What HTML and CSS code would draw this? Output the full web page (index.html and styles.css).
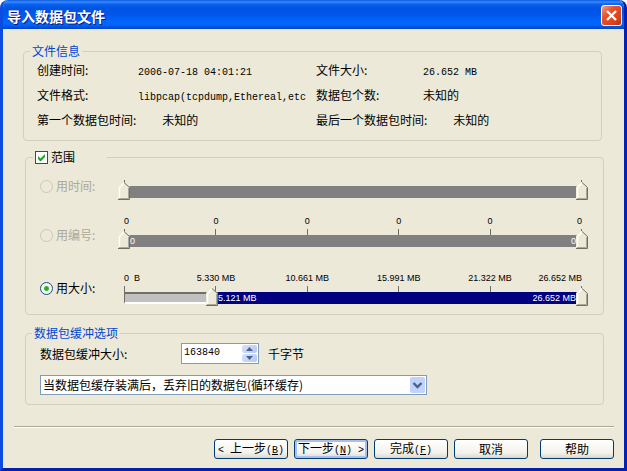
FILE: index.html
```html
<!DOCTYPE html>
<html lang="zh-CN">
<head>
<meta charset="utf-8">
<title>导入数据包文件</title>
<link rel="stylesheet" href="styles.css">
</head>
<body>
<form class="window">
  <header class="titlebar">
    <h1>导入数据包文件</h1>
    <button class="close" type="button" aria-label="关闭">
      <svg viewBox="0 0 19 19" width="19" height="19"><path d="M5 5l9 9M14 5l-9 9" stroke="#fff" stroke-width="2.4" fill="none"/></svg>
    </button>
  </header>

  <main class="content">
    <fieldset class="group group-info">
      <legend>文件信息</legend>
      <dl class="info">
        <div><dt>创建时间:</dt><dd class="mono">2006-07-18 04:01:21</dd></div>
        <div><dt>文件大小:</dt><dd class="mono">26.652 MB</dd></div>
        <div><dt>文件格式:</dt><dd class="mono">libpcap(tcpdump,Ethereal,etc</dd></div>
        <div><dt>数据包个数:</dt><dd>未知的</dd></div>
        <div class="long"><dt>第一个数据包时间:</dt><dd>未知的</dd></div>
        <div class="long"><dt>最后一个数据包时间:</dt><dd>未知的</dd></div>
      </dl>
    </fieldset>

    <fieldset class="group group-range">
      <legend class="toggle">
        <input class="check" type="checkbox" id="range-on" checked><label for="range-on">范围</label>
      </legend>

      <div class="row">
        <div class="choice">
          <input class="radio" type="radio" name="by" id="by-time" disabled><label for="by-time">用时间:</label>
        </div>
        <div class="slider">
          <ul class="scale"><li></li><li></li></ul>
          <div class="track">
            <div class="span"></div>
            <input type="range" min="0" max="1000" value="0" disabled aria-label="开始时间">
            <input type="range" min="0" max="1000" value="1000" disabled aria-label="结束时间">
          </div>
        </div>
      </div>

      <div class="row">
        <div class="choice">
          <input class="radio" type="radio" name="by" id="by-number" disabled><label for="by-number">用编号:</label>
        </div>
        <div class="slider">
          <ul class="scale"><li>0</li><li>0</li><li>0</li><li>0</li><li>0</li><li>0</li></ul>
          <div class="track">
            <div class="span"><span>0</span><span>0</span></div>
            <input type="range" min="0" max="1000" value="0" disabled aria-label="开始编号">
            <input type="range" min="0" max="1000" value="1000" disabled aria-label="结束编号">
          </div>
        </div>
      </div>

      <div class="row row-active">
        <div class="choice">
          <input class="radio" type="radio" name="by" id="by-size" checked><label for="by-size">用大小:</label>
        </div>
        <div class="slider">
          <ul class="scale"><li>0 &nbsp;B</li><li>5.330 MB</li><li>10.661 MB</li><li>15.991 MB</li><li>21.322 MB</li><li>26.652 MB</li></ul>
          <div class="track">
            <div class="rest" style="width: 19.2%"></div>
            <div class="span"><span>5.121 MB</span><span>26.652 MB</span></div>
            <input type="range" min="0" max="1000" value="192" aria-label="开始大小">
            <input type="range" min="0" max="1000" value="1000" aria-label="结束大小">
          </div>
        </div>
      </div>
    </fieldset>

    <fieldset class="group group-buffer">
      <legend>数据包缓冲选项</legend>
      <div class="buffer">
        <label class="buffer-label" for="size">数据包缓冲大小:</label>
        <div class="spinner">
          <input class="mono" id="size" type="text" value="163840">
          <div class="steps">
            <button type="button" aria-label="增加"><svg viewBox="0 0 15 8" width="15" height="8"><path d="M4 6l3.500-4 3.500 4z" fill="#4d6185"/></svg></button>
            <button type="button" aria-label="减少"><svg viewBox="0 0 15 8" width="15" height="8"><path d="M4 2l3.500 4 3.500-4z" fill="#4d6185"/></svg></button>
          </div>
        </div>
        <span>千字节</span>
      </div>
      <select class="mode" aria-label="缓冲方式">
        <option>当数据包缓存装满后，丢弃旧的数据包(循环缓存)</option>
      </select>
    </fieldset>
  </main>

  <footer class="actions">
    <button type="button"><span class="mono">&lt; </span>上一步<span class="mono">(<u>B</u>)</span></button>
    <button type="button" class="default">下一步<span class="mono">(<u>N</u>) &gt;</span></button>
    <button type="button">完成<span class="mono">(<u>F</u>)</span></button>
    <button type="button">取消</button>
    <button type="button" class="help">帮助</button>
  </footer>
</form>
</body>
</html>
```

FILE: styles.css
```css
* {
  box-sizing: border-box;
}

body {
  margin: 0;
  background: #fff;
  color: #000;
  font: 12px/16px "Noto Sans CJK SC", sans-serif;
}

button,
input,
select {
  margin: 0;
  font: inherit;
  color: inherit;
}

.mono {
  font-family: "Liberation Mono", "Noto Sans CJK SC", monospace;
  font-size: 10px;
  white-space: pre;
}

.window {
  display: flex;
  flex-direction: column;
  min-height: 100vh;
  border: 3px solid #0831d9;
  border-top: 0;
  border-left-color: #0a4be0;
  border-right-color: #0423b4;
  border-bottom-color: #0420b0;
  border-radius: 8px 8px 0 0;
  background: #ece9d8;
  overflow: hidden;
}

/* Title bar */

.titlebar {
  display: flex;
  align-items: center;
  justify-content: space-between;
  height: 29px;
  margin: 0 -3px;
  padding: 2px 5px 0 7px;
  background: linear-gradient(#0a58dc 0, #3a8cff 2px, #0a62ee 4px, #0054e3 8px, #0056e8 14px, #0066ff 22px, #0064f8 25px, #0042c4 29px);
}

.titlebar h1 {
  margin: 0;
  color: #fff;
  font-size: 14px;
  font-weight: bold;
  line-height: 18px;
  text-shadow: 1px 1px #0a1883;
}

.close {
  display: flex;
  width: 21px;
  height: 21px;
  padding: 0;
  border: 1px solid #fff;
  border-radius: 3px;
  background: linear-gradient(135deg, #f0a088, #e4532c 35%, #d8421c 75%, #b8300c);
}

/* Groups */

.content {
  flex: 1;
  padding: 14px 20px 0;
}

.group {
  min-width: 0;
  margin: 0;
  padding: 0;
  border: 1px solid #d0d0bf;
  border-radius: 4px;
}

.group legend {
  margin-left: 6px;
  padding: 0 2px;
  color: #0046d5;
}

.group-info {
  margin-right: 2px;
  padding: 0 13px 9px;
}

.group-info legend {
  margin-left: -7px;
}

.group-range {
  margin: 8px 0 10px 2px;
  padding: 15px 15px 10px 14px;
}

.group-buffer {
  margin-left: 2px;
  padding: 2px 14px 9px;
}

.group-buffer legend {
  margin-left: -8px;
}

.info {
  display: grid;
  grid-template-columns: 279px 1fr;
  row-gap: 3px;
  margin: 0;
  line-height: 22px;
  white-space: nowrap;
}

.info div {
  display: flex;
  align-items: baseline;
  height: 22px;
}

.info dt {
  width: 101px;
}

.info div:nth-child(even) dt {
  width: 107px;
}

.info .long dt,
.info .long:nth-child(even) dt {
  width: auto;
  margin-right: 26px;
}

.info dd {
  margin: 0;
}

/* Range sliders */

.group .toggle {
  display: flex;
  align-items: center;
  gap: 3px;
  min-width: 74px;
  margin-left: -7px;
  color: #000;
}

.check {
  appearance: none;
  width: 13px;
  height: 13px;
  border: 1px solid #1c5180;
  background: #fff url("data:image/svg+xml,%3Csvg xmlns='http://www.w3.org/2000/svg' viewBox='0 0 11 11'%3E%3Cpath d='M2 4v3l2.500 2.500L9 5V2L4.500 6.500z' fill='%2321a121'/%3E%3C/svg%3E");
}

.row {
  display: grid;
  grid-template-columns: 78px 1fr;
  align-items: end;
}

.row + .row {
  margin-top: 17px;
}

.row + .row-active {
  margin-top: 25px;
}

.choice {
  display: flex;
  align-items: center;
  gap: 3px;
  height: 24px;
  margin-top: -6px;
}

.row-active .choice {
  align-self: center;
  margin-top: 0;
}

.radio {
  appearance: none;
  width: 13px;
  height: 13px;
  border: 1px solid #1c5180;
  border-radius: 50%;
  background: #fff;
}

.radio:checked {
  background: radial-gradient(circle, #21a121 0, #35b935 2px, #f4f4ee 3px);
}

.radio:disabled {
  border-color: #cac8bb;
  background: #ece9d8;
}

.radio:disabled + label {
  color: #aca899;
}

.scale {
  display: flex;
  justify-content: space-between;
  margin: 0 6px;
  padding: 0;
  list-style: none;
  font: 9px/12px "Liberation Sans", sans-serif;
  white-space: nowrap;
}

.scale li {
  display: flex;
  flex-direction: column;
  align-items: center;
  width: 1px;
}

.scale li:first-child {
  align-items: flex-start;
}

.scale li:last-child {
  align-items: flex-end;
}

.scale li::after {
  content: "";
  width: 1px;
  height: 6px;
  background: #716f64;
}

.scale li:not(:empty)::after {
  margin-top: 2px;
}

.track {
  position: relative;
  display: flex;
  height: 12px;
  padding: 0 6px;
}

.rest {
  border: solid #716f64;
  border-width: 2px 0 2px 1px;
  border-bottom-color: #fff;
  background: #c0c0c0;
}

.span {
  display: flex;
  flex: 1;
  justify-content: space-between;
  padding: 0 6px;
  background: #808080;
  color: #fff;
  font: 9px/12px "Liberation Sans", sans-serif;
}

.row-active .span {
  background: #000080;
}

.track input {
  appearance: none;
  position: absolute;
  top: -4px;
  left: 0;
  width: 100%;
  height: 18px;
  background: none;
  pointer-events: none;
}

.track input::-webkit-slider-thumb {
  appearance: none;
  width: 12px;
  height: 18px;
  background: url("data:image/svg+xml,%3Csvg xmlns='http://www.w3.org/2000/svg' viewBox='0 0 12 18'%3E%3Cpath d='M0 18V5l5-5h1l6 5v13z' fill='%23ece9d8'/%3E%3Cpath d='M1.500 17V5.500L6 1' fill='none' stroke='%23fff' stroke-width='1.500'/%3E%3Cpath d='M6 .5l5.500 5V17.500H0' fill='none' stroke='%23716f64'/%3E%3Cpath d='M10.500 6v10.500H1' fill='none' stroke='%23aca899'/%3E%3C/svg%3E");
  pointer-events: auto;
}

/* Buffer options */

.buffer {
  display: flex;
  align-items: center;
  margin-bottom: 11px;
}

.buffer-label {
  width: 141px;
}

.spinner {
  display: flex;
  width: 78px;
  height: 21px;
  margin-right: 9px;
  padding: 1px;
  border: 1px solid #7f9db9;
  background: #fff;
}

.spinner input {
  flex: 1;
  min-width: 0;
  padding: 0 1px 2px;
  border: 0;
  background: none;
}

.steps {
  display: flex;
  flex-direction: column;
  gap: 1px;
}

.steps button {
  display: flex;
  padding: 0;
  border: 0;
  border-radius: 2px;
  background: linear-gradient(135deg, #d6e2fd, #b4c8f6);
}

.mode {
  display: block;
  appearance: none;
  width: 387px;
  max-width: 100%;
  height: 20px;
  padding: 0 18px 0 2px;
  border: 1px solid #7f9db9;
  border-radius: 0;
  background: #fff url("data:image/svg+xml,%3Csvg xmlns='http://www.w3.org/2000/svg' width='15' height='16' viewBox='0 0 15 16'%3E%3Crect width='15' height='16' rx='2' fill='%23c1d2fb'/%3E%3Cpath d='M3.500 6L7.500 10l4-4' fill='none' stroke='%234d6185' stroke-width='2.400'/%3E%3C/svg%3E") right 1px center no-repeat;
}

/* Buttons */

.actions {
  display: flex;
  justify-content: flex-end;
  gap: 6px;
  margin: 0 10px 0 11px;
  padding: 12px 0 9px;
  border-top: 1px solid #aca899;
  box-shadow: inset 0 1px #fff;
}

.actions button {
  width: 74px;
  height: 20px;
  padding: 0;
  border: 1px solid #003c74;
  border-radius: 3px;
  background: linear-gradient(#fff, #f3f2ec 70%, #dcd7cb);
  line-height: 16px;
  white-space: nowrap;
}

.actions .default {
  box-shadow: inset 0 0 0 2px #a8c0f0;
}

.actions .help {
  margin-left: 6px;
}
```
